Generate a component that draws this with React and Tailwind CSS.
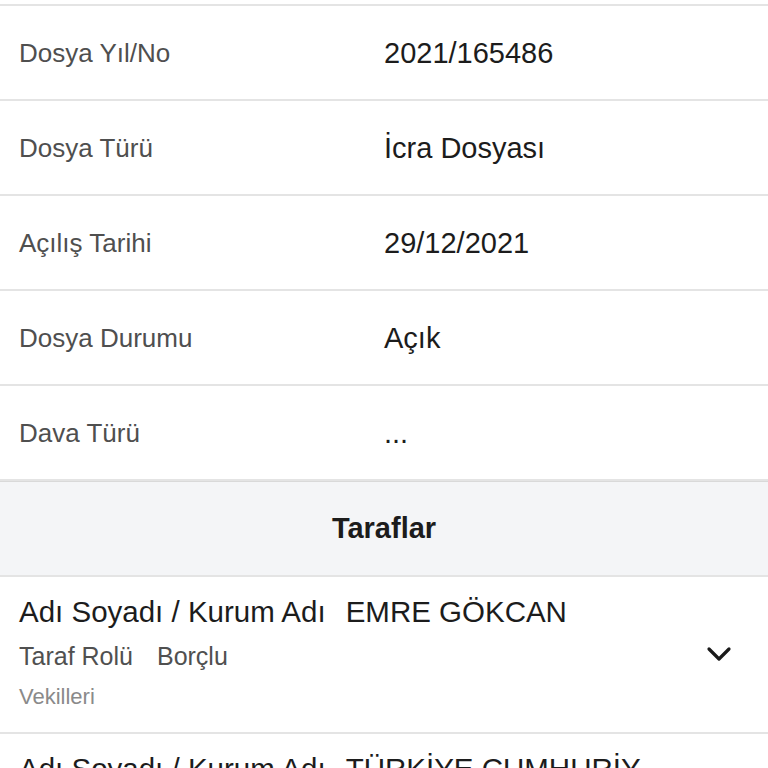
const details = [
  { label: 'Dosya Yıl/No', value: '2021/165486' },
  { label: 'Dosya Türü', value: 'İcra Dosyası' },
  { label: 'Açılış Tarihi', value: '29/12/2021' },
  { label: 'Dosya Durumu', value: 'Açık' },
  { label: 'Dava Türü', value: '...' },
];

const parties = [
  { name: 'EMRE GÖKCAN', role: 'Borçlu' },
  { name: 'TÜRKİYE CUMHURİYETİ', role: 'Alacaklı' },
];

const Chevron = () => (
  <svg width="26" height="16" viewBox="0 0 26 16" fill="none">
    <path d="M3 3l10 10L23 3" stroke="#1a1a1a" strokeWidth="3.2" strokeLinecap="round" strokeLinejoin="round" />
  </svg>
);

export default function App() {
  return (
    <div className="h-screen bg-white font-['Liberation_Sans',Arial,sans-serif] overflow-hidden">
      <div className="h-[6px] border-b-2 border-[#e4e4e4]"></div>

      {details.map((d) => (
        <div key={d.label} className="grid grid-cols-2 h-[95px] items-center border-b-2 border-[#e4e4e4]">
          <div className="pl-[19px] pt-[2px] text-[26px] text-[#4f4f4f]">{d.label}</div>
          <div className="pt-[2px] text-[29px] text-[#1c1c1c]">{d.value}</div>
        </div>
      ))}

      <div className="h-[96px] flex items-center justify-center bg-[#f4f5f7] border-t border-[#d9d9d9] border-b-2 border-b-[#e4e4e4]">
        <span className="text-[29px] font-bold text-[#1c1c1c]">Taraflar</span>
      </div>

      {parties.map((p) => (
        <div key={p.name} className="flex items-center border-b-2 border-[#e4e4e4] pl-[19px] pr-[36px] pt-[16px] pb-[17px]">
          <div className="flex-1 flex flex-col">
            <div className="flex gap-[20px] text-[29.5px] text-[#1c1c1c] leading-[38px]">
              <span>Adı Soyadı / Kurum Adı</span>
              <span className="max-w-[305px] break-all">{p.name}</span>
            </div>
            <div className="flex gap-[24px] text-[25px] text-[#505050] leading-[44px] mt-[3px]">
              <span>Taraf Rolü</span>
              <span>{p.role}</span>
            </div>
            <div className="text-[22px] text-[#8a8a8a] leading-[36px] mt-[1px]">Vekilleri</div>
          </div>
          <Chevron />
        </div>
      ))}
    </div>
  );
}
